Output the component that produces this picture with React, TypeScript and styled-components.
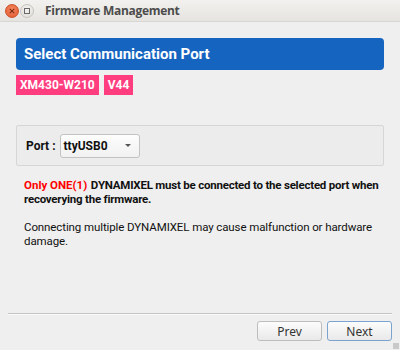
import React from 'react';
import styled, { createGlobalStyle } from 'styled-components';

const GlobalStyle = createGlobalStyle`
  html, body {
    margin: 0;
    padding: 0;
    background: #efefef;
  }
  * {
    box-sizing: border-box;
  }
`;

// =====================
// Window chrome
// =====================

const Window = styled.div`
  position: relative;
  width: 400px;
  height: 350px;
  display: flex;
  flex-direction: column;
  background: #efefef;
  font-family: Roboto, 'Liberation Sans', sans-serif;
  overflow: hidden;
`;

const TitleBar = styled.div`
  height: 22px;
  flex-shrink: 0;
  display: flex;
  align-items: center;
  padding-left: 5px;
  gap: 1px;
  background: linear-gradient(#f2f1ef, #e6e4e0);
  border-bottom: 1px solid #d8d6d2;
`;

const WinButton = styled.div<{ $close?: boolean }>`
  width: 14px;
  height: 14px;
  border-radius: 50%;
  display: flex;
  align-items: center;
  justify-content: center;
  background: ${p => (p.$close
    ? 'radial-gradient(circle at 50% 35%, #f4875f, #e4572e)'
    : 'radial-gradient(circle at 50% 35%, #f4f3f1, #dedbd6)')};
  border: 1px solid ${p => (p.$close ? '#c9522d' : '#c8c5c0')};
`;

const WindowTitle = styled.span`
  margin-left: 10px;
  font-family: 'Open Sans', 'DejaVu Sans', sans-serif;
  font-weight: bold;
  font-size: 12px;
  color: #4c4c4c;
  letter-spacing: -0.3px;
`;

// =====================
// Page body
// =====================

const Body = styled.div`
  flex: 1;
  display: flex;
  flex-direction: column;
  padding: 16px 16px 0;
`;

const Banner = styled.div`
  height: 32px;
  display: flex;
  align-items: center;
  padding-left: 8px;
  background: #1565c0;
  border-radius: 4px;
  color: #fff;
  font-weight: bold;
  font-size: 15px;
`;

const BadgeRow = styled.div`
  display: flex;
  gap: 5px;
  margin-top: 5px;
`;

const Badge = styled.span`
  height: 20px;
  display: flex;
  align-items: center;
  padding: 0 4px;
  background: #ff3d7f;
  color: #fff;
  font-weight: bold;
  font-size: 12px;
`;

const PortGroup = styled.div`
  margin-top: 30px;
  height: 41px;
  display: flex;
  align-items: center;
  gap: 4px;
  padding: 0 9px;
  border: 1px solid #d6d6d6;
  border-radius: 2px;
  background: #ececec;
`;

const PortLabel = styled.span`
  font-weight: bold;
  font-size: 12px;
  color: #111;
`;

const Combo = styled.div`
  width: 80px;
  height: 24px;
  display: flex;
  align-items: center;
  justify-content: space-between;
  padding: 0 8px 0 3px;
  border: 1px solid #c3c3c3;
  border-radius: 3px;
  background: linear-gradient(#fdfdfd, #f1f1f1);
  font-weight: bold;
  font-size: 12px;
  color: #111;
`;

const Caret = styled.span`
  width: 0;
  height: 0;
  border-left: 3.5px solid transparent;
  border-right: 3.5px solid transparent;
  border-top: 3.5px solid #555;
`;

const Notice = styled.p<{ $bold?: boolean }>`
  margin: ${p => (p.$bold ? '12px' : '14px')} 0 0;
  padding: 0 0 0 8px;
  font-size: 11.5px;
  line-height: 14px;
  letter-spacing: ${p => (p.$bold ? '-0.22px' : '-0.1px')};
  font-weight: ${p => (p.$bold ? 'bold' : 'normal')};
  color: #111;
`;

const Red = styled.span`
  color: #ff0000;
  letter-spacing: 0;
  margin-right: 1px;
`;

// =====================
// Footer
// =====================

const Separator = styled.div`
  margin: auto 8px 0;
  height: 2px;
  border-top: 1px solid #c4c4c4;
  border-bottom: 1px solid #fafafa;
`;

const Footer = styled.div`
  display: flex;
  justify-content: flex-end;
  gap: 5px;
  padding: 6px 8px 9px;
`;

const Button = styled.button<{ $focused?: boolean }>`
  width: 65px;
  height: 20px;
  padding: 0;
  font-family: 'Noto Sans', 'DejaVu Sans', sans-serif;
  font-size: 12px;
  color: #333;
  background: linear-gradient(#fcfcfc, #e9e9e9);
  border: 1px solid ${p => (p.$focused ? '#7aa3cf' : '#bdbdbd')};
  border-radius: 3px;
  display: flex;
  align-items: center;
  justify-content: center;
`;

const Grip = styled.div`
  position: absolute;
  right: 1px;
  bottom: 1px;
  width: 6px;
  height: 6px;
  background-image: radial-gradient(#c6c6c6 0.7px, transparent 0.8px);
  background-size: 2px 2px;
`;

export default function App() {
  return (
    <>
      <GlobalStyle />
      <Window>
        <TitleBar>
          <WinButton $close>
            <svg width="6" height="6" viewBox="0 0 6 6">
              <path d="M0.8 0.8 L5.2 5.2 M5.2 0.8 L0.8 5.2" stroke="#7a2b14" strokeWidth="1.1" />
            </svg>
          </WinButton>
          <WinButton>
            <svg width="6" height="6" viewBox="0 0 6 6">
              <rect x="0.5" y="0.5" width="5" height="5" fill="none" stroke="#6a6a6a" strokeWidth="1" />
            </svg>
          </WinButton>
          <WindowTitle>Firmware Management</WindowTitle>
        </TitleBar>
        <Body>
          <Banner>Select Communication Port</Banner>
          <BadgeRow>
            <Badge>XM430-W210</Badge>
            <Badge>V44</Badge>
          </BadgeRow>
          <PortGroup>
            <PortLabel>Port :</PortLabel>
            <Combo>
              ttyUSB0
              <Caret />
            </Combo>
          </PortGroup>
          <Notice $bold>
            <Red>Only ONE(1)</Red> DYNAMIXEL must be connected to the selected port when recoverying the firmware.
          </Notice>
          <Notice>
            Connecting multiple DYNAMIXEL may cause malfunction or hardware damage.
          </Notice>
        </Body>
        <Separator />
        <Footer>
          <Button>Prev</Button>
          <Button $focused>Next</Button>
        </Footer>
        <Grip />
      </Window>
    </>
  );
}
